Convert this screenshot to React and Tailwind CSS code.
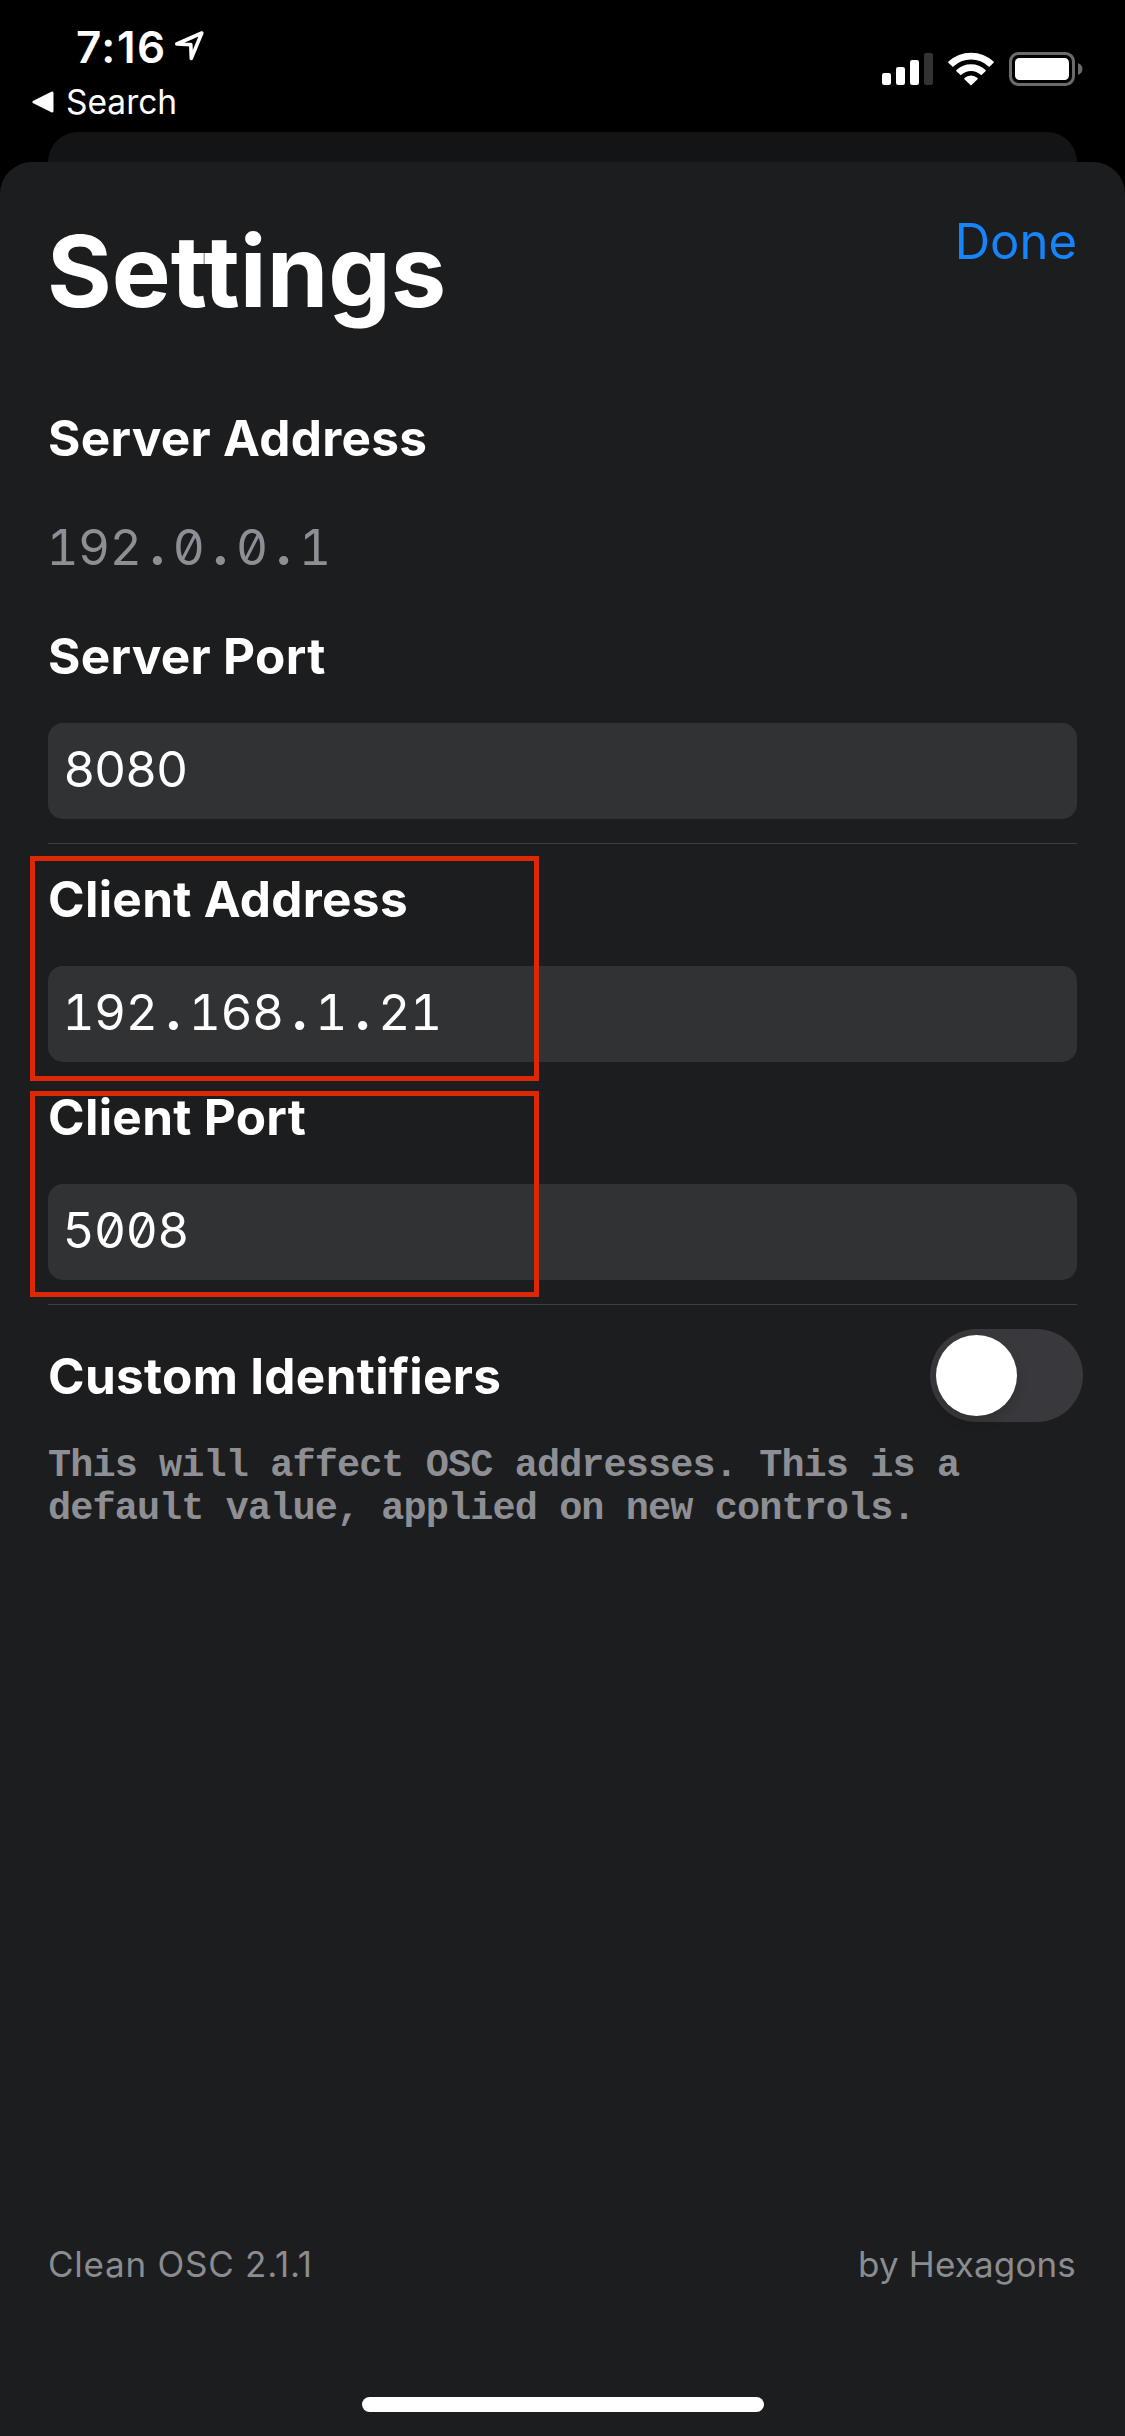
function LocationArrow() {
  return (
    <svg className="ml-[6px] mt-[7px]" width="34" height="34" viewBox="174 29 34 34" fill="none" stroke="white" strokeWidth="3.6" strokeLinejoin="round">
      <path d="M177.8 45L202.8 34L192.3 59.4L191.8 45.6Z" />
    </svg>
  );
}

function BackTriangle() {
  return (
    <svg width="22" height="22" viewBox="0 0 22 22" fill="white" stroke="white" strokeWidth="3" strokeLinejoin="round">
      <path d="M2 11L20 2V20Z" />
    </svg>
  );
}

function Signal() {
  return (
    <svg width="51" height="34" viewBox="0 0 51 34" fill="white">
      <rect x="0" y="21" width="9" height="12" rx="2.2" />
      <rect x="14" y="15" width="9" height="18" rx="2.2" />
      <rect x="28" y="8" width="9" height="25" rx="2.2" />
      <rect x="42" y="1" width="9" height="32" rx="2.2" fill="#333334" />
    </svg>
  );
}

function Wifi() {
  return (
    <svg className="ml-[15px]" width="46" height="34" viewBox="0 0 46 34" fill="white" stroke="white" strokeWidth="1.6" strokeLinejoin="round">
      <path d="M1 10.2A32.2 32.2 0 0 1 45 10.2L41.2 14A26.6 26.6 0 0 0 4.8 14Z" />
      <path d="M9 18.6A20.4 20.4 0 0 1 37 18.6L33.2 22.2A15 15 0 0 0 12.8 22.2Z" />
      <path d="M17 26.6A8.8 8.8 0 0 1 29 26.6L23 32.4Z" />
    </svg>
  );
}

function Battery() {
  return (
    <svg className="ml-[15px]" width="74" height="34" viewBox="0 0 74 34">
      <rect x="1.5" y="1.5" width="63" height="31" rx="8" fill="none" stroke="#6b6b6c" strokeWidth="3" />
      <rect x="6" y="6" width="54" height="22" rx="4.5" fill="white" />
      <path d="M69 11C75 13.500 75 20.500 69 23Z" fill="#6b6b6c" />
    </svg>
  );
}

function StatusBar() {
  return (
    <header className="flex h-[132px] items-start justify-between pl-[32px] pr-[42px] text-white">
      <div className="pt-[21px]">
        <div className="flex pl-[44px]">
          <span className="text-[44px] font-semibold leading-[52px] tracking-[1.5px]">7:16</span>
          <LocationArrow />
        </div>
        <div className="mt-[9px] flex items-center gap-[12px]">
          <BackTriangle />
          <span className="text-[33.5px] leading-[40px]">Search</span>
        </div>
      </div>
      <div className="flex pt-[52px]">
        <Signal />
        <Wifi />
        <Battery />
      </div>
    </header>
  );
}

/* Tabular digits with slashed zeros; periods take a full digit cell. */
function MonoDigits({ value }) {
  return (
    <span className="-ml-[1.5px] tracking-[-0.5px] [font-feature-settings:'zero','tnum']">
      {value.split('').map((ch, i) =>
        ch === '.' ? (
          <span key={i} className="inline-block w-[31.5px] text-center font-extrabold">.</span>
        ) : (
          ch
        )
      )}
    </span>
  );
}

function Label({ children }) {
  return <h2 className="text-[49.5px] font-bold leading-[60px] tracking-[0.3px]">{children}</h2>;
}

function Field({ children }) {
  return (
    <div className="mt-[37px] flex h-[96px] items-center rounded-[15px] bg-[#313234] pb-[4px] pl-[16px] text-[49.5px] leading-[60px]">
      {children}
    </div>
  );
}

function Divider() {
  return <div className="mt-[24px] h-px bg-[#3e3f41]" />;
}

export default function App() {
  return (
    <div className="flex h-[2436px] w-[1125px] flex-col overflow-hidden bg-black font-['Inter',sans-serif] text-white">
      <StatusBar />
      <div className="mx-[48px] h-[60px] shrink-0 rounded-t-[30px] bg-[#131416]" />
      <main className="-mt-[30px] flex flex-1 flex-col rounded-t-[32px] bg-[#1c1d1f] px-[48px] pt-[49px]">
        <div className="flex items-start justify-between">
          <h1 className="-ml-px text-[99px] font-bold leading-[120px]">Settings</h1>
          <button className="mt-px text-[49px] leading-[60px] text-[#1684fb]">Done</button>
        </div>

        <section className="mt-[77px]">
          <Label>Server Address</Label>
          <p className="mt-[49px] text-[49.5px] leading-[60px] text-[#8e8f94]">
            <MonoDigits value="192.0.0.1" />
          </p>
        </section>
        <section className="mt-[49px]">
          <Label>Server Port</Label>
          <Field>8080</Field>
        </section>
        <Divider />

        <section className="relative mt-[25px]">
          <Label>Client Address</Label>
          <Field><MonoDigits value="192.168.1.21" /></Field>
          <div className="pointer-events-none absolute left-[-18px] top-[-13px] h-[225px] w-[509px] border-[5px] border-[#dc2806]" />
        </section>
        <section className="relative mt-[25px]">
          <Label>Client Port</Label>
          <Field><MonoDigits value="5008" /></Field>
          <div className="pointer-events-none absolute left-[-18px] top-[4px] h-[206px] w-[509px] border-[5px] border-[#dc2806]" />
        </section>
        <Divider />

        <section className="mt-[24px]">
          <div className="-mr-[6px] flex items-center justify-between">
            <Label>Custom Identifiers</Label>
            <button className="flex h-[93px] w-[153px] items-center rounded-full bg-[#39393d] pl-[6px]" aria-label="Custom Identifiers">
              <span className="size-[81px] rounded-full bg-white shadow-[0_6px_12px_rgba(0,0,0,0.15)]" />
            </button>
          </div>
          <p className="mt-[23px] whitespace-nowrap font-['Liberation_Mono',monospace] text-[38.5px] font-bold leading-[43px] tracking-[-0.88px] text-[#8e8f94]">
            This will affect OSC addresses. This is a<br />
            default value, applied on new controls.
          </p>
        </section>

        <footer className="mt-auto flex justify-between text-[35px] leading-[44px] text-[#8b8c8f]">
          <span className="tracking-[0.75px]">Clean OSC 2.1.1</span>
          <span className="mr-px tracking-[0.15px]">by Hexagons</span>
        </footer>
        <div className="mb-[24px] mt-[111px] h-[15px] w-[402px] self-center rounded-full bg-white" />
      </main>
    </div>
  );
}
